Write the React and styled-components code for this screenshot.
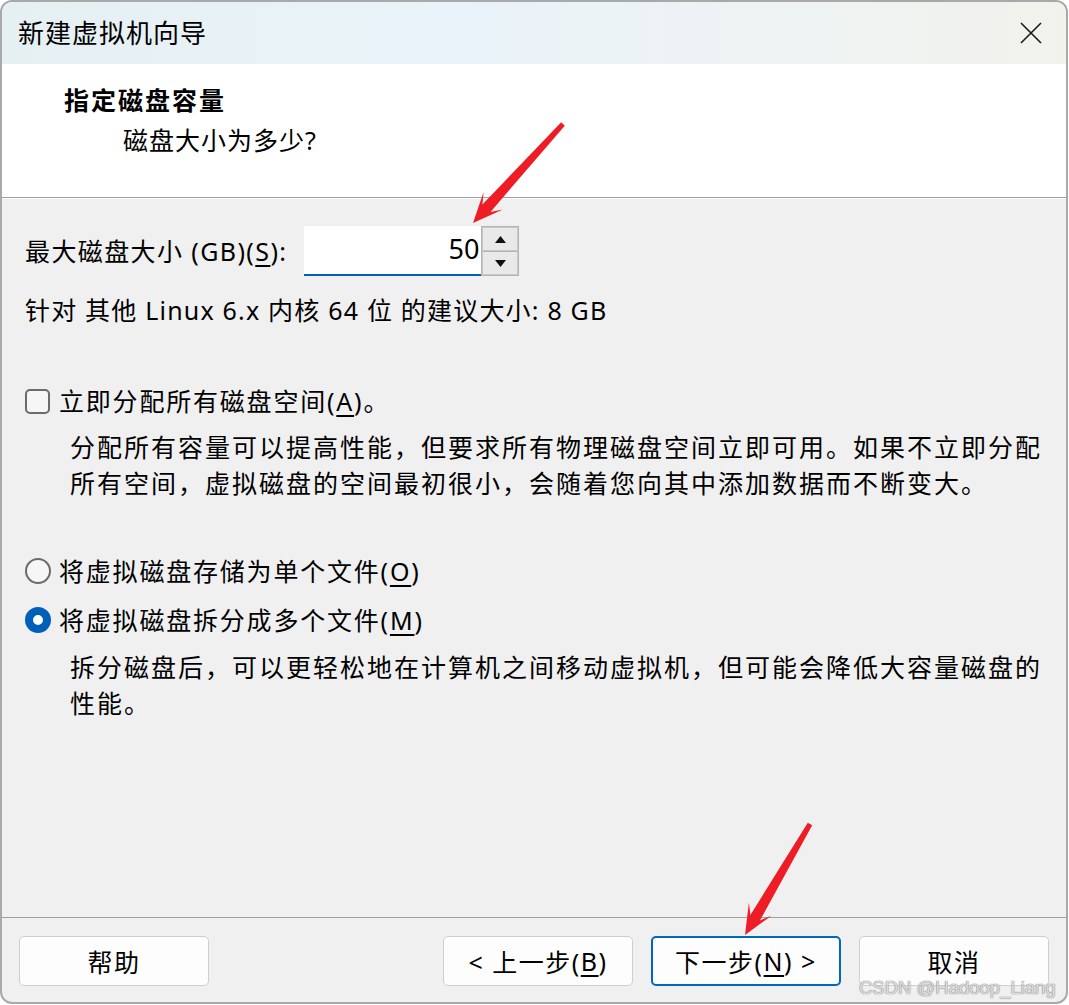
import React from 'react';
import styled, { createGlobalStyle } from 'styled-components';

const GlobalStyle = createGlobalStyle`
  html, body {
    margin: 0;
    padding: 0;
    background: #ffffff;
  }
  body {
    font-family: "Noto Sans", "Noto Sans CJK SC", sans-serif;
    color: #000;
  }
`;

const Page = styled.div`
  position: relative;
  width: 1069px;
  height: 1005px;
  overflow: hidden;
`;

const Window = styled.div`
  box-sizing: border-box;
  width: 1068px;
  height: 1004px;
  border: 2px solid #a9a9a9;
  border-radius: 12px;
  overflow: hidden;
  background: #f0f0f0;
  display: flex;
  flex-direction: column;
`;

const TitleBar = styled.div`
  height: 62px;
  flex-shrink: 0;
  display: flex;
  align-items: center;
  justify-content: space-between;
  padding: 0 24px 0 16px;
  background: linear-gradient(90deg, #e6f0f3 0%, #eaf3f9 45%, #f2f2ed 100%);
`;

const Title = styled.div`
  font-size: 26px;
  line-height: 36px;
  letter-spacing: 1px;
`;

const Header = styled.div`
  height: 134px;
  flex-shrink: 0;
  box-sizing: border-box;
  background: #ffffff;
  padding: 18px 0 0 62px;
  border-bottom: 1px solid #a0a0a0;
`;

const Heading = styled.div`
  font-size: 25px;
  font-weight: bold;
  line-height: 36px;
  letter-spacing: 2px;
`;

const SubHeading = styled.div`
  font-size: 25px;
  line-height: 36px;
  margin: 4px 0 0 59px;
  letter-spacing: 1px;
`;

const Body = styled.div`
  flex: 1;
  display: flex;
  flex-direction: column;
  padding: 0 0 0 23px;
  border-top: 1px solid #ffffff;
`;

const SizeRow = styled.div`
  display: flex;
  align-items: center;
  height: 50px;
  margin-top: 27px;
`;

const Label = styled.span`
  font-size: 25px;
  line-height: 36px;
  white-space: nowrap;
  letter-spacing: ${p => p.$spacing || '1px'};
`;

const Key = styled.span`
  text-decoration: underline;
  text-underline-offset: 4px;
  text-decoration-thickness: 2px;
`;

const SpinBox = styled.div`
  display: flex;
  margin-left: 17px;
  height: 50px;
`;

const SpinInput = styled.div`
  box-sizing: border-box;
  width: 177px;
  height: 50px;
  background: #ffffff;
  border-bottom: 2px solid #0063b1;
  font-size: 27px;
  line-height: 46px;
  text-align: right;
  padding-right: 2px;
`;

const SpinButtons = styled.div`
  box-sizing: border-box;
  width: 38px;
  height: 50px;
  border: 1px solid #b4b4b4;
  display: flex;
  flex-direction: column;
`;

const SpinButton = styled.div`
  flex: 1;
  display: flex;
  align-items: center;
  justify-content: center;
  background: #e9e9e9;
  border: 1px solid #c8c8c8;
  ${p => p.$down && 'border-top: 1px solid #b4b4b4;'}
`;

const Text = styled.div`
  font-size: 25px;
  line-height: 36px;
  white-space: nowrap;
  margin-top: ${p => p.$mt || 0}px;
  letter-spacing: 1.2px;
`;

const OptionRow = styled.div`
  display: flex;
  align-items: center;
  height: 36px;
  margin-top: ${p => p.$mt || 0}px;
`;

const CheckBox = styled.span`
  box-sizing: border-box;
  width: 25px;
  height: 25px;
  border: 2px solid #6b6b6b;
  border-radius: 5px;
  background: #f6f6f6;
  margin-right: 9px;
`;

const Radio = styled.span`
  box-sizing: border-box;
  width: 26px;
  height: 26px;
  border-radius: 50%;
  margin-right: 8px;
  border: ${p => (p.$checked ? '8px solid #005fb8' : '2px solid #6b6b6b')};
  background: ${p => (p.$checked ? '#ffffff' : '#f6f6f6')};
`;

const Desc = styled.div`
  padding-left: 45px;
  margin-top: ${p => p.$mt || 0}px;
  font-size: 25px;
  line-height: 36px;
  letter-spacing: 2px;
  white-space: nowrap;
`;

const Footer = styled.div`
  flex-shrink: 0;
  height: 85px;
  box-sizing: border-box;
  border-top: 1px solid #a0a0a0;
  display: flex;
  align-items: flex-start;
  padding: 18px 0 0 17px;
`;

const Button = styled.div`
  box-sizing: border-box;
  width: 190px;
  height: 50px;
  display: flex;
  align-items: center;
  justify-content: center;
  background: #fdfdfd;
  border: ${p => (p.$primary ? '2px solid #0067c0' : '1px solid #cfcfcf')};
  border-radius: 5px;
  font-size: 25px;
  letter-spacing: 1.5px;
  white-space: nowrap;
  margin-left: ${p => p.$ml || 0}px;
`;

const Spacer = styled.div`
  flex: 1;
`;

const Overlay = styled.svg`
  position: absolute;
  left: 0;
  top: 0;
  pointer-events: none;
`;

const Watermark = styled.div`
  position: absolute;
  left: 859px;
  top: 977px;
  font-family: "Liberation Sans", sans-serif;
  font-size: 18.5px;
  line-height: 22px;
  white-space: nowrap;
  color: rgba(235, 235, 235, 0.9);
  text-shadow: 0 0 1px #7a7a7a, 0 0 1px #7a7a7a;
`;

// стрелка: хвост -> острие, с загнутыми назад усиками
const arrowPoints = (tx, ty, px, py) => {
  const dx = px - tx;
  const dy = py - ty;
  const len = Math.hypot(dx, dy);
  const ux = dx / len;
  const uy = dy / len;
  const nx = -uy;
  const ny = ux;
  const at = (d, w) => [px - ux * d + nx * w, py - uy * d + ny * w];
  const pts = [
    [tx + nx * 2.5, ty + ny * 2.5],
    at(20, 5.5),
    at(30, 13),
    [px, py],
    at(30, -13),
    at(20, -5.5),
    [tx - nx * 2.5, ty - ny * 2.5],
  ];
  return pts.map(p => p.map(v => v.toFixed(1)).join(',')).join(' ');
};

const App = () => (
  <Page>
    <GlobalStyle />
    <Window>
      <TitleBar>
        <Title>新建虚拟机向导</Title>
        <svg width="22" height="22" viewBox="0 0 22 22">
          <path d="M1 1 L21 21 M21 1 L1 21" stroke="#1a1a1a" strokeWidth="1.6" fill="none" />
        </svg>
      </TitleBar>
      <Header>
        <Heading>指定磁盘容量</Heading>
        <SubHeading>磁盘大小为多少?</SubHeading>
      </Header>
      <Body>
        <SizeRow>
          <Label $spacing="1.4px">
            最大磁盘大小 (GB)(<Key>S</Key>):
          </Label>
          <SpinBox>
            <SpinInput>50</SpinInput>
            <SpinButtons>
              <SpinButton>
                <svg width="11" height="7" viewBox="0 0 11 7">
                  <path d="M5.5 0 L11 7 L0 7 Z" fill="#111" />
                </svg>
              </SpinButton>
              <SpinButton $down>
                <svg width="11" height="7" viewBox="0 0 11 7">
                  <path d="M0 0 L11 0 L5.5 7 Z" fill="#111" />
                </svg>
              </SpinButton>
            </SpinButtons>
          </SpinBox>
        </SizeRow>
        <Text $mt={16}>针对 其他 Linux 6.x 内核 64 位 的建议大小: 8 GB</Text>
        <OptionRow $mt={55}>
          <CheckBox />
          <Label $spacing="1.8px">
            立即分配所有磁盘空间(<Key>A</Key>)。
          </Label>
        </OptionRow>
        <Desc $mt={10}>
          分配所有容量可以提高性能，但要求所有物理磁盘空间立即可用。如果不立即分配
          <br />
          所有空间，虚拟磁盘的空间最初很小，会随着您向其中添加数据而不断变大。
        </Desc>
        <OptionRow $mt={52}>
          <Radio />
          <Label $spacing="1.8px">
            将虚拟磁盘存储为单个文件(<Key>O</Key>)
          </Label>
        </OptionRow>
        <OptionRow $mt={13}>
          <Radio $checked />
          <Label $spacing="1.8px">
            将虚拟磁盘拆分成多个文件(<Key>M</Key>)
          </Label>
        </OptionRow>
        <Desc $mt={11}>
          拆分磁盘后，可以更轻松地在计算机之间移动虚拟机，但可能会降低大容量磁盘的
          <br />
          性能。
        </Desc>
        <Spacer />
      </Body>
      <Footer>
        <Button>帮助</Button>
        <Button $ml={234}>
          &lt; 上一步(<Key>B</Key>)
        </Button>
        <Button $ml={18} $primary>
          下一步(<Key>N</Key>) &gt;
        </Button>
        <Button $ml={18}>取消</Button>
      </Footer>
    </Window>
    <Overlay width="1069" height="1005" viewBox="0 0 1069 1005">
      <polygon points={arrowPoints(563, 124, 473, 223)} fill="#ee1c25" />
      <polygon points={arrowPoints(810, 824, 745, 935)} fill="#ee1c25" />
    </Overlay>
    <Watermark>CSDN @Hadoop_Liang</Watermark>
  </Page>
);

export default App;
